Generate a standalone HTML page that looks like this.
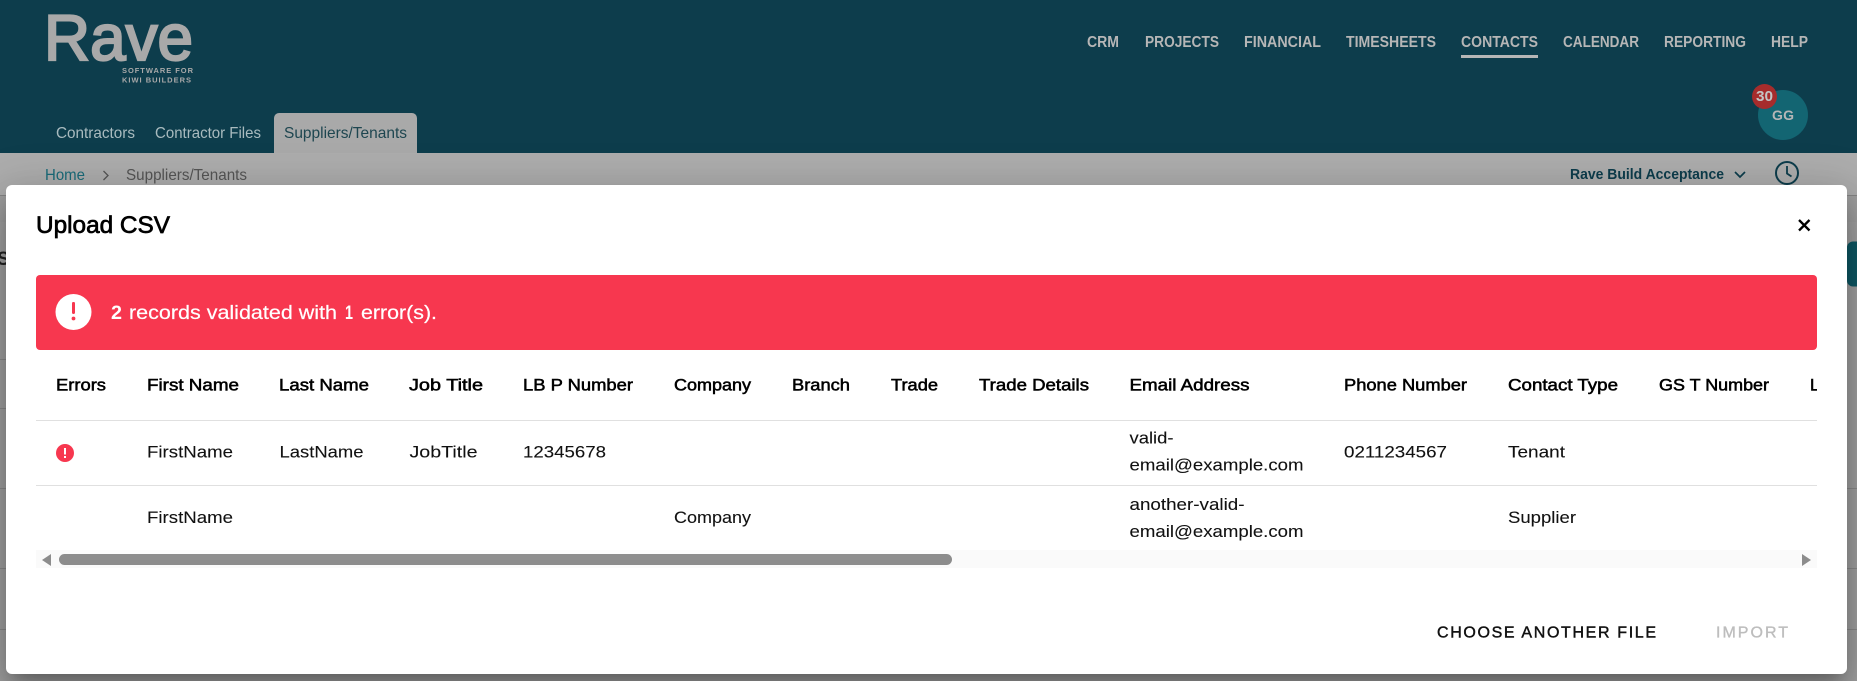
<!DOCTYPE html>
<html><head><meta charset="utf-8"><title>Upload CSV</title>
<style>
html,body{margin:0;padding:0;width:1857px;height:681px;overflow:hidden;background:#adadad}
#s{position:absolute;left:0;top:0;width:1857px;height:681px;display:block}
text{font-family:"Liberation Sans",Arial,sans-serif;white-space:pre}
#modal{position:absolute;left:6px;top:185px;width:1841px;height:489px;background:#fff;border-radius:6px;box-shadow:0 11px 15px -7px rgba(0,0,0,.24),0 24px 38px 3px rgba(0,0,0,.17),0 9px 46px 8px rgba(0,0,0,.15)}
#u{position:absolute;left:0;top:0}
.h{font-size:17px;fill:#000;stroke:#000;stroke-width:.55}
.c{font-size:17px;fill:#111;stroke:#111;stroke-width:.1}
.n{font-size:15.5px;font-weight:700;fill:#b6b6b6}
.t{font-size:16px;fill:#a9bbbf}
</style></head><body>
<svg id="s" width="1857" height="681" viewBox="0 0 1857 681" xmlns="http://www.w3.org/2000/svg">
<rect width="1857" height="681" fill="#a3a3a3"/>
<rect y="153" width="1857" height="42" fill="#adadad"/>
<rect y="196" width="1857" height="26" fill="#a0a0a0"/>
<rect y="195" width="1857" height="1" fill="#858585"/>
<g fill="#8c8c8c"><rect y="359" width="8" height="1"/><rect y="408" width="8" height="1"/><rect y="488" width="1857" height="1"/><rect y="568" width="1857" height="1"/><rect y="629" width="1857" height="1"/></g>
<text x="-3" y="265" font-size="19" font-weight="700" fill="#222">S</text>
<rect x="1847" y="241.500" width="25" height="45" rx="6" fill="#0f5a66"/>
<rect width="1857" height="153" fill="#0d3d4c"/>
<text x="44" y="60" font-size="65" fill="#a9a9a9" stroke="#a9a9a9" stroke-width="2.200" textLength="149" lengthAdjust="spacingAndGlyphs">Rave</text>
<text x="122" y="73" font-size="7.500" font-weight="700" fill="#a9a9a9" textLength="71" lengthAdjust="spacing">SOFTWARE FOR</text>
<text x="122" y="82.500" font-size="7.500" font-weight="700" fill="#a9a9a9" textLength="69" lengthAdjust="spacing">KIWI BUILDERS</text>
<text class="n" x="1087" y="47" textLength="32" lengthAdjust="spacingAndGlyphs">CRM</text>
<text class="n" x="1145" y="47" textLength="74" lengthAdjust="spacingAndGlyphs">PROJECTS</text>
<text class="n" x="1244" y="47" textLength="77" lengthAdjust="spacingAndGlyphs">FINANCIAL</text>
<text class="n" x="1346" y="47" textLength="90" lengthAdjust="spacingAndGlyphs">TIMESHEETS</text>
<text class="n" x="1461" y="47" textLength="77" lengthAdjust="spacingAndGlyphs">CONTACTS</text>
<text class="n" x="1563" y="47" textLength="76" lengthAdjust="spacingAndGlyphs">CALENDAR</text>
<text class="n" x="1664" y="47" textLength="82" lengthAdjust="spacingAndGlyphs">REPORTING</text>
<text class="n" x="1771" y="47" textLength="37" lengthAdjust="spacingAndGlyphs">HELP</text>
<rect x="1461" y="55" width="77" height="3" fill="#b6b6b6"/>
<path d="M274 153v-35a5 5 0 0 1 5-5h133a5 5 0 0 1 5 5v35z" fill="#a9a9a9"/>
<text class="t" x="56" y="138" textLength="79" lengthAdjust="spacingAndGlyphs">Contractors</text>
<text class="t" x="155" y="138" textLength="106" lengthAdjust="spacingAndGlyphs">Contractor Files</text>
<text class="t" x="284" y="138" textLength="123" lengthAdjust="spacingAndGlyphs" style="fill:#1e4650">Suppliers/Tenants</text>
<circle cx="1783" cy="115" r="25" fill="#136572"/>
<text x="1772" y="120" font-size="14" font-weight="700" fill="#b6b6b6" textLength="22" lengthAdjust="spacing">GG</text>
<circle cx="1764.500" cy="96.500" r="12.500" fill="#a62c2c"/>
<text x="1756" y="101" font-size="14.500" font-weight="700" fill="#c4c4c4" textLength="17" lengthAdjust="spacingAndGlyphs">30</text>
<text x="45" y="180" font-size="16" fill="#1a6b79" textLength="40" lengthAdjust="spacingAndGlyphs">Home</text>
<path d="M103.500 171l4.500 4.500-4.500 4.500" fill="none" stroke="#555" stroke-width="1.300"/>
<text x="126" y="180" font-size="16" fill="#555" textLength="121" lengthAdjust="spacingAndGlyphs">Suppliers/Tenants</text>
<text x="1570" y="179" font-size="15" font-weight="700" fill="#0d3d4c" textLength="154" lengthAdjust="spacingAndGlyphs">Rave Build Acceptance</text>
<path d="M1735 172l5 5 5-5" fill="none" stroke="#0d3d4c" stroke-width="1.700"/>
<circle cx="1787" cy="173" r="11" fill="none" stroke="#0d3d4c" stroke-width="2"/>
<path d="M1787 166v7.500l4.500 3" fill="none" stroke="#0d3d4c" stroke-width="1.800"/>
</svg>
<div id="modal"></div>
<svg id="u" width="1857" height="681" viewBox="0 0 1857 681" xmlns="http://www.w3.org/2000/svg">
<defs><clipPath id="tb"><rect x="36" y="360" width="1781" height="190"/></clipPath></defs>
<text x="36" y="233" font-size="24" fill="#000" stroke="#000" stroke-width=".7" textLength="134" lengthAdjust="spacingAndGlyphs">Upload CSV</text>
<path d="M1799 220l10.500 10.500M1809.500 220l-10.500 10.500" stroke="#000" stroke-width="2.300" fill="none"/>
<rect x="36" y="275" width="1781" height="75" rx="4" fill="#f7374f"/>
<circle cx="73.500" cy="312" r="18" fill="#fff"/>
<rect x="72" y="302" width="3" height="12" rx="1.200" fill="#f7374f"/>
<circle cx="73.500" cy="318.500" r="1.900" fill="#f7374f"/>
<text x="111" y="319" font-size="19.500" font-weight="700" fill="#fff" textLength="11" lengthAdjust="spacingAndGlyphs">2</text>
<text x="129" y="319" font-size="19.500" fill="#fff" stroke="#fff" stroke-width=".2" textLength="208" lengthAdjust="spacingAndGlyphs">records validated with</text>
<text x="345" y="319" font-size="19.500" font-weight="700" fill="#fff" textLength="8" lengthAdjust="spacingAndGlyphs">1</text>
<text x="361" y="319" font-size="19.500" fill="#fff" stroke="#fff" stroke-width=".2" textLength="76" lengthAdjust="spacingAndGlyphs">error(s).</text>
<g clip-path="url(#tb)">
<text class="h" x="56" y="390.500" textLength="50" lengthAdjust="spacingAndGlyphs">Errors</text>
<text class="h" x="147" y="390.500" textLength="92" lengthAdjust="spacingAndGlyphs">First Name</text>
<text class="h" x="279" y="390.500" textLength="90" lengthAdjust="spacingAndGlyphs">Last Name</text>
<text class="h" x="409" y="390.500" textLength="74" lengthAdjust="spacingAndGlyphs">Job Title</text>
<text class="h" x="523" y="390.500" textLength="110" lengthAdjust="spacingAndGlyphs">LB P Number</text>
<text class="h" x="674" y="390.500" textLength="77" lengthAdjust="spacingAndGlyphs">Company</text>
<text class="h" x="792" y="390.500" textLength="58" lengthAdjust="spacingAndGlyphs">Branch</text>
<text class="h" x="891" y="390.500" textLength="47" lengthAdjust="spacingAndGlyphs">Trade</text>
<text class="h" x="979" y="390.500" textLength="110" lengthAdjust="spacingAndGlyphs">Trade Details</text>
<text class="h" x="1129.500" y="390.500" textLength="120" lengthAdjust="spacingAndGlyphs">Email Address</text>
<text class="h" x="1344" y="390.500" textLength="123" lengthAdjust="spacingAndGlyphs">Phone Number</text>
<text class="h" x="1508" y="390.500" textLength="110" lengthAdjust="spacingAndGlyphs">Contact Type</text>
<text class="h" x="1659" y="390.500" textLength="110" lengthAdjust="spacingAndGlyphs">GS T Number</text>
<text class="h" x="1810" y="390.500">L</text>
</g>
<rect x="36" y="420" width="1781" height="1" fill="#e0e0e0"/>
<rect x="36" y="485" width="1781" height="1" fill="#e0e0e0"/>
<circle cx="65" cy="453" r="9" fill="#f7374f"/>
<rect x="64" y="448" width="2" height="6.500" fill="#fff"/>
<rect x="64" y="456" width="2" height="2" fill="#fff"/>
<text class="c" x="147" y="457.500" textLength="86" lengthAdjust="spacingAndGlyphs">FirstName</text>
<text class="c" x="279.500" y="457.500" textLength="84" lengthAdjust="spacingAndGlyphs">LastName</text>
<text class="c" x="409.500" y="457.500" textLength="68" lengthAdjust="spacingAndGlyphs">JobTitle</text>
<text class="c" x="523" y="457.500" textLength="83" lengthAdjust="spacingAndGlyphs">12345678</text>
<text class="c" x="1129.500" y="443.500" textLength="44" lengthAdjust="spacingAndGlyphs">valid-</text>
<text class="c" x="1129.500" y="470.500" textLength="174" lengthAdjust="spacingAndGlyphs">email@example.com</text>
<text class="c" x="1344" y="457.500" textLength="103" lengthAdjust="spacingAndGlyphs">0211234567</text>
<text class="c" x="1508" y="457.500" textLength="57" lengthAdjust="spacingAndGlyphs">Tenant</text>
<text class="c" x="147" y="523" textLength="86" lengthAdjust="spacingAndGlyphs">FirstName</text>
<text class="c" x="674" y="523" textLength="77" lengthAdjust="spacingAndGlyphs">Company</text>
<text class="c" x="1129.500" y="510" textLength="115" lengthAdjust="spacingAndGlyphs">another-valid-</text>
<text class="c" x="1129.500" y="537" textLength="174" lengthAdjust="spacingAndGlyphs">email@example.com</text>
<text class="c" x="1508" y="523" textLength="68" lengthAdjust="spacingAndGlyphs">Supplier</text>
<rect x="36" y="550" width="1781" height="18" fill="#fafafa"/>
<path d="M51 554v12l-9-6z" fill="#8c8c8c"/>
<path d="M1802 554v12l9-6z" fill="#8c8c8c"/>
<rect x="59" y="554" width="893" height="11" rx="5.500" fill="#8c8c8c"/>
<text x="1437" y="637.500" font-size="16" fill="#111" stroke="#111" stroke-width=".45" textLength="219" lengthAdjust="spacing">CHOOSE ANOTHER FILE</text>
<text x="1716" y="637.500" font-size="16" fill="#bdbdbd" stroke="#bdbdbd" stroke-width=".35" textLength="72" lengthAdjust="spacing">IMPORT</text>
</svg>
</body></html>
